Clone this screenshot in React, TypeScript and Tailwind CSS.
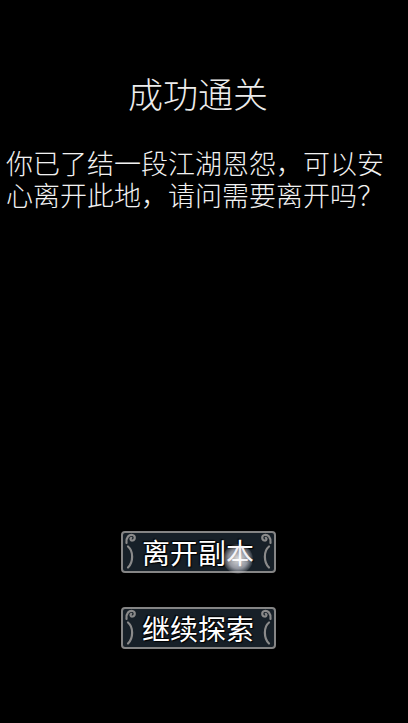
import React from 'react';

const Curl: React.FC<{ flip?: boolean }> = ({ flip }) => (
    <svg
        width="13"
        height="38"
        viewBox="0 0 13 38"
        className={`absolute top-0 ${flip ? 'right-[1px] -scale-x-100' : 'left-[1px]'}`}
        fill="none"
        stroke="#8a8a8a"
        strokeWidth="2.2"
        strokeLinecap="round"
    >
        {/* small spiral in the corner */}
        <path d="M2.5 10 C2 4 5 1.5 8.5 2 C11.5 2.5 11.5 7 8.5 7.5 C6.5 7.8 5.8 5.5 7.3 4.8" />
        {/* bracket curve down the side */}
        <path d="M4 13.5 C9.5 18 9.5 29 4 34.5" />
    </svg>
);

const GameButton: React.FC<{ label: string; children?: React.ReactNode }> = ({ label, children }) => (
    <button className="relative w-[155px] h-[42px] rounded-[4px] border-2 border-[#858585] bg-[#172028] flex items-center justify-center">
        <Curl />
        <Curl flip />
        <span
            className="text-[28px] leading-none text-white font-normal"
            style={{ textShadow: '0 0 2px #000, 1px 1px 1px #000, -1px -1px 1px #000' }}
        >
            {label}
        </span>
        {children}
    </button>
);

export default function App() {
    return (
        <div
            className="w-[408px] h-[723px] bg-black flex flex-col items-center overflow-hidden pr-[12px]"
            style={{ fontFamily: '"Noto Sans CJK SC", "Noto Sans", sans-serif' }}
        >
            <h1 className="mt-[72px] text-[35px] leading-[42px] text-[#ececec] font-light">成功通关</h1>

            <p className="mt-[33px] self-stretch pl-[6px] text-[27px] leading-[32px] text-[#f2f2f2] font-light">
                你已了结一段江湖恩怨，可以安心离开此地，请问需要离开吗？
            </p>

            <div className="mt-[320px] flex flex-col items-center gap-[34px]">
                <GameButton label="离开副本">
                    {/* touch highlight */}
                    <span
                        className="absolute left-[100px] top-[11px] w-[30px] h-[30px] rounded-full"
                        style={{ background: 'radial-gradient(circle, rgba(255,255,255,0.85) 0%, rgba(230,230,240,0.6) 45%, rgba(200,200,210,0) 75%)' }}
                    />
                </GameButton>
                <GameButton label="继续探索" />
            </div>
        </div>
    );
}
